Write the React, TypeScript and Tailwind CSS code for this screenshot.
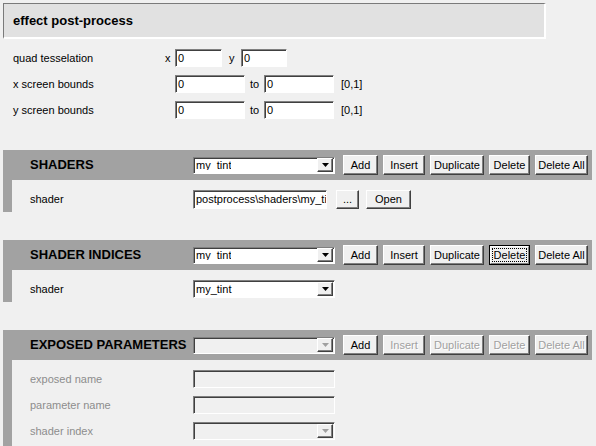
import React from "react";

const sunken =
  "border-t border-l border-[#808080] border-b border-r border-b-white border-r-white shadow-[inset_1px_1px_0_#404040]";

function Input({ w, h = 18, value = "", disabled = false }: { w: number; h?: number; value?: string; disabled?: boolean }) {
  return (
    <div
      className={`${sunken} ${disabled ? "bg-[#f0f0f0]" : "bg-white"} flex items-center pl-[2px] overflow-hidden whitespace-nowrap`}
      style={{ width: w, height: h }}
    >
      {value}
    </div>
  );
}

function Arrow({ disabled = false }: { disabled?: boolean }) {
  return (
    <div className="w-[16px] h-[14px] bg-[#f0f0f0] border-t border-l border-t-white border-l-white border-b border-r border-b-[#404040] border-r-[#404040] shadow-[inset_-1px_-1px_0_#808080] flex items-center justify-center shrink-0">
      <svg width="7" height="4" viewBox="0 0 7 4">
        <path d="M0 0 H7 L3.5 4 Z" fill={disabled ? "#a0a0a0" : "#000"} />
      </svg>
    </div>
  );
}

function Combo({ w, h = 17, value = "", disabled = false, clip = false }: { w: number; h?: number; value?: string; disabled?: boolean; clip?: boolean }) {
  return (
    <div
      className={`${sunken} ${disabled ? "bg-[#f0f0f0]" : "bg-white"} flex items-center justify-between pl-[2px] pr-[1px]`}
      style={{ width: w, height: h }}
    >
      {clip ? (
        <span className="h-[10px] leading-[11px] overflow-hidden whitespace-nowrap">{value}</span>
      ) : (
        <span className="whitespace-nowrap">{value}</span>
      )}
      <Arrow disabled={disabled} />
    </div>
  );
}

function Btn({ w, label, disabled = false, focus = false, h = 20 }: { w: number; label: string; disabled?: boolean; focus?: boolean; h?: number }) {
  if (focus) {
    return (
      <div className="border border-black bg-[#f0f0f0]" style={{ width: w, height: h }}>
        <div className="w-full h-full border-t border-l border-t-white border-l-white border-b border-r border-b-[#808080] border-r-[#808080] flex items-center justify-center">
          <span className="border border-dotted border-black leading-[12px] px-[1px]">{label}</span>
        </div>
      </div>
    );
  }
  return (
    <div
      className={`bg-[#f0f0f0] border-t border-l border-t-white border-l-white border-b border-r border-b-[#404040] border-r-[#404040] shadow-[inset_-1px_-1px_0_#808080] flex items-center justify-center whitespace-nowrap ${
        disabled ? "text-[#a0a0a0] [text-shadow:1px_1px_0_#ffffff]" : "text-black"
      }`}
      style={{ width: w, height: h }}
    >
      {label}
    </div>
  );
}

function Section({
  title,
  comboValue,
  comboDisabled = false,
  disabledButtons = [],
  focusButton,
  contentHeight,
  children,
}: {
  title: string;
  comboValue: string;
  comboDisabled?: boolean;
  disabledButtons?: string[];
  focusButton?: string;
  contentHeight: number;
  children: React.ReactNode;
}) {
  const buttons: [string, number][] = [
    ["Add", 35],
    ["Insert", 42],
    ["Duplicate", 54],
    ["Delete", 41],
    ["Delete All", 53],
  ];
  return (
    <div className="ml-[3px] w-[589px] flex flex-col">
      <div className="h-[30px] bg-[#a2a2a2] flex items-center">
        <div className="w-[190px] pl-[27px] font-bold text-[13px] whitespace-nowrap">{title}</div>
        <Combo w={142} value={comboValue} disabled={comboDisabled} clip />
        <div className="ml-[8px] flex gap-[5px]">
          {buttons.map(([l, w]) => (
            <Btn key={l} w={w} label={l} disabled={disabledButtons.includes(l)} focus={focusButton === l} />
          ))}
        </div>
      </div>
      <div className="flex" style={{ height: contentHeight }}>
        <div className="w-[9px] bg-[#a2a2a2]" />
        <div className="flex-1 pt-[10px] flex flex-col gap-[8px]">{children}</div>
      </div>
    </div>
  );
}

function Row({ label, disabled = false, children }: { label: string; disabled?: boolean; children: React.ReactNode }) {
  return (
    <div className="flex items-center">
      <div className={`w-[181px] pl-[18px] ${disabled ? "text-[#8d8d8d]" : ""}`}>{label}</div>
      {children}
    </div>
  );
}

export default function App() {
  return (
    <div className="w-[596px] h-[446px] bg-[#f0f0f0] overflow-hidden pt-[3px] font-['Liberation_Sans',Arial,sans-serif] text-[11px] text-black">
      <div className="ml-[3px] w-[543px] h-[36px] bg-[#e1e1e1] border-t border-l border-[#7a7a7a] border-b-2 border-r-2 border-b-white border-r-white flex items-center pl-[9px]">
        <span className="font-bold text-[13px]">effect post-process</span>
      </div>

      <div className="mt-[10px] flex flex-col gap-[8px]">
        <div className="flex items-center h-[18px]">
          <div className="w-[160px] pl-[13px]">quad tesselation</div>
          <div className="w-[15px] pl-[5px]">x</div>
          <Input w={47} value="0" />
          <div className="w-[19px] pl-[7px]">y</div>
          <Input w={46} value="0" />
        </div>
        <div className="flex items-center h-[18px]">
          <div className="w-[175px] pl-[13px]">x screen bounds</div>
          <Input w={70} value="0" />
          <div className="w-[19px] pl-[5px]">to</div>
          <Input w={70} value="0" />
          <div className="ml-[7px]">[0,1]</div>
        </div>
        <div className="flex items-center h-[18px]">
          <div className="w-[175px] pl-[13px]">y screen bounds</div>
          <Input w={70} value="0" />
          <div className="w-[19px] pl-[5px]">to</div>
          <Input w={70} value="0" />
          <div className="ml-[7px]">[0,1]</div>
        </div>
      </div>

      <div className="mt-[31px]">
        <Section title="SHADERS" comboValue="my_tint" contentHeight={32}>
          <Row label="shader">
            <Input w={134} h={19} value="postprocess\shaders\my_ti" />
            <div className="ml-[9px]">
              <Btn w={23} h={19} label="..." />
            </div>
            <div className="ml-[7px]">
              <Btn w={45} h={19} label="Open" />
            </div>
          </Row>
        </Section>
      </div>

      <div className="mt-[28px]">
        <Section title="SHADER INDICES" comboValue="my_tint" focusButton="Delete" contentHeight={32}>
          <Row label="shader">
            <Combo w={142} h={18} value="my_tint" />
          </Row>
        </Section>
      </div>

      <div className="mt-[28px]">
        <Section
          title="EXPOSED PARAMETERS"
          comboValue=""
          comboDisabled
          disabledButtons={["Insert", "Duplicate", "Delete", "Delete All"]}
          contentHeight={90}
        >
          <Row label="exposed name" disabled>
            <Input w={142} disabled />
          </Row>
          <Row label="parameter name" disabled>
            <Input w={142} disabled />
          </Row>
          <Row label="shader index" disabled>
            <Combo w={142} h={18} disabled />
          </Row>
        </Section>
      </div>
    </div>
  );
}
